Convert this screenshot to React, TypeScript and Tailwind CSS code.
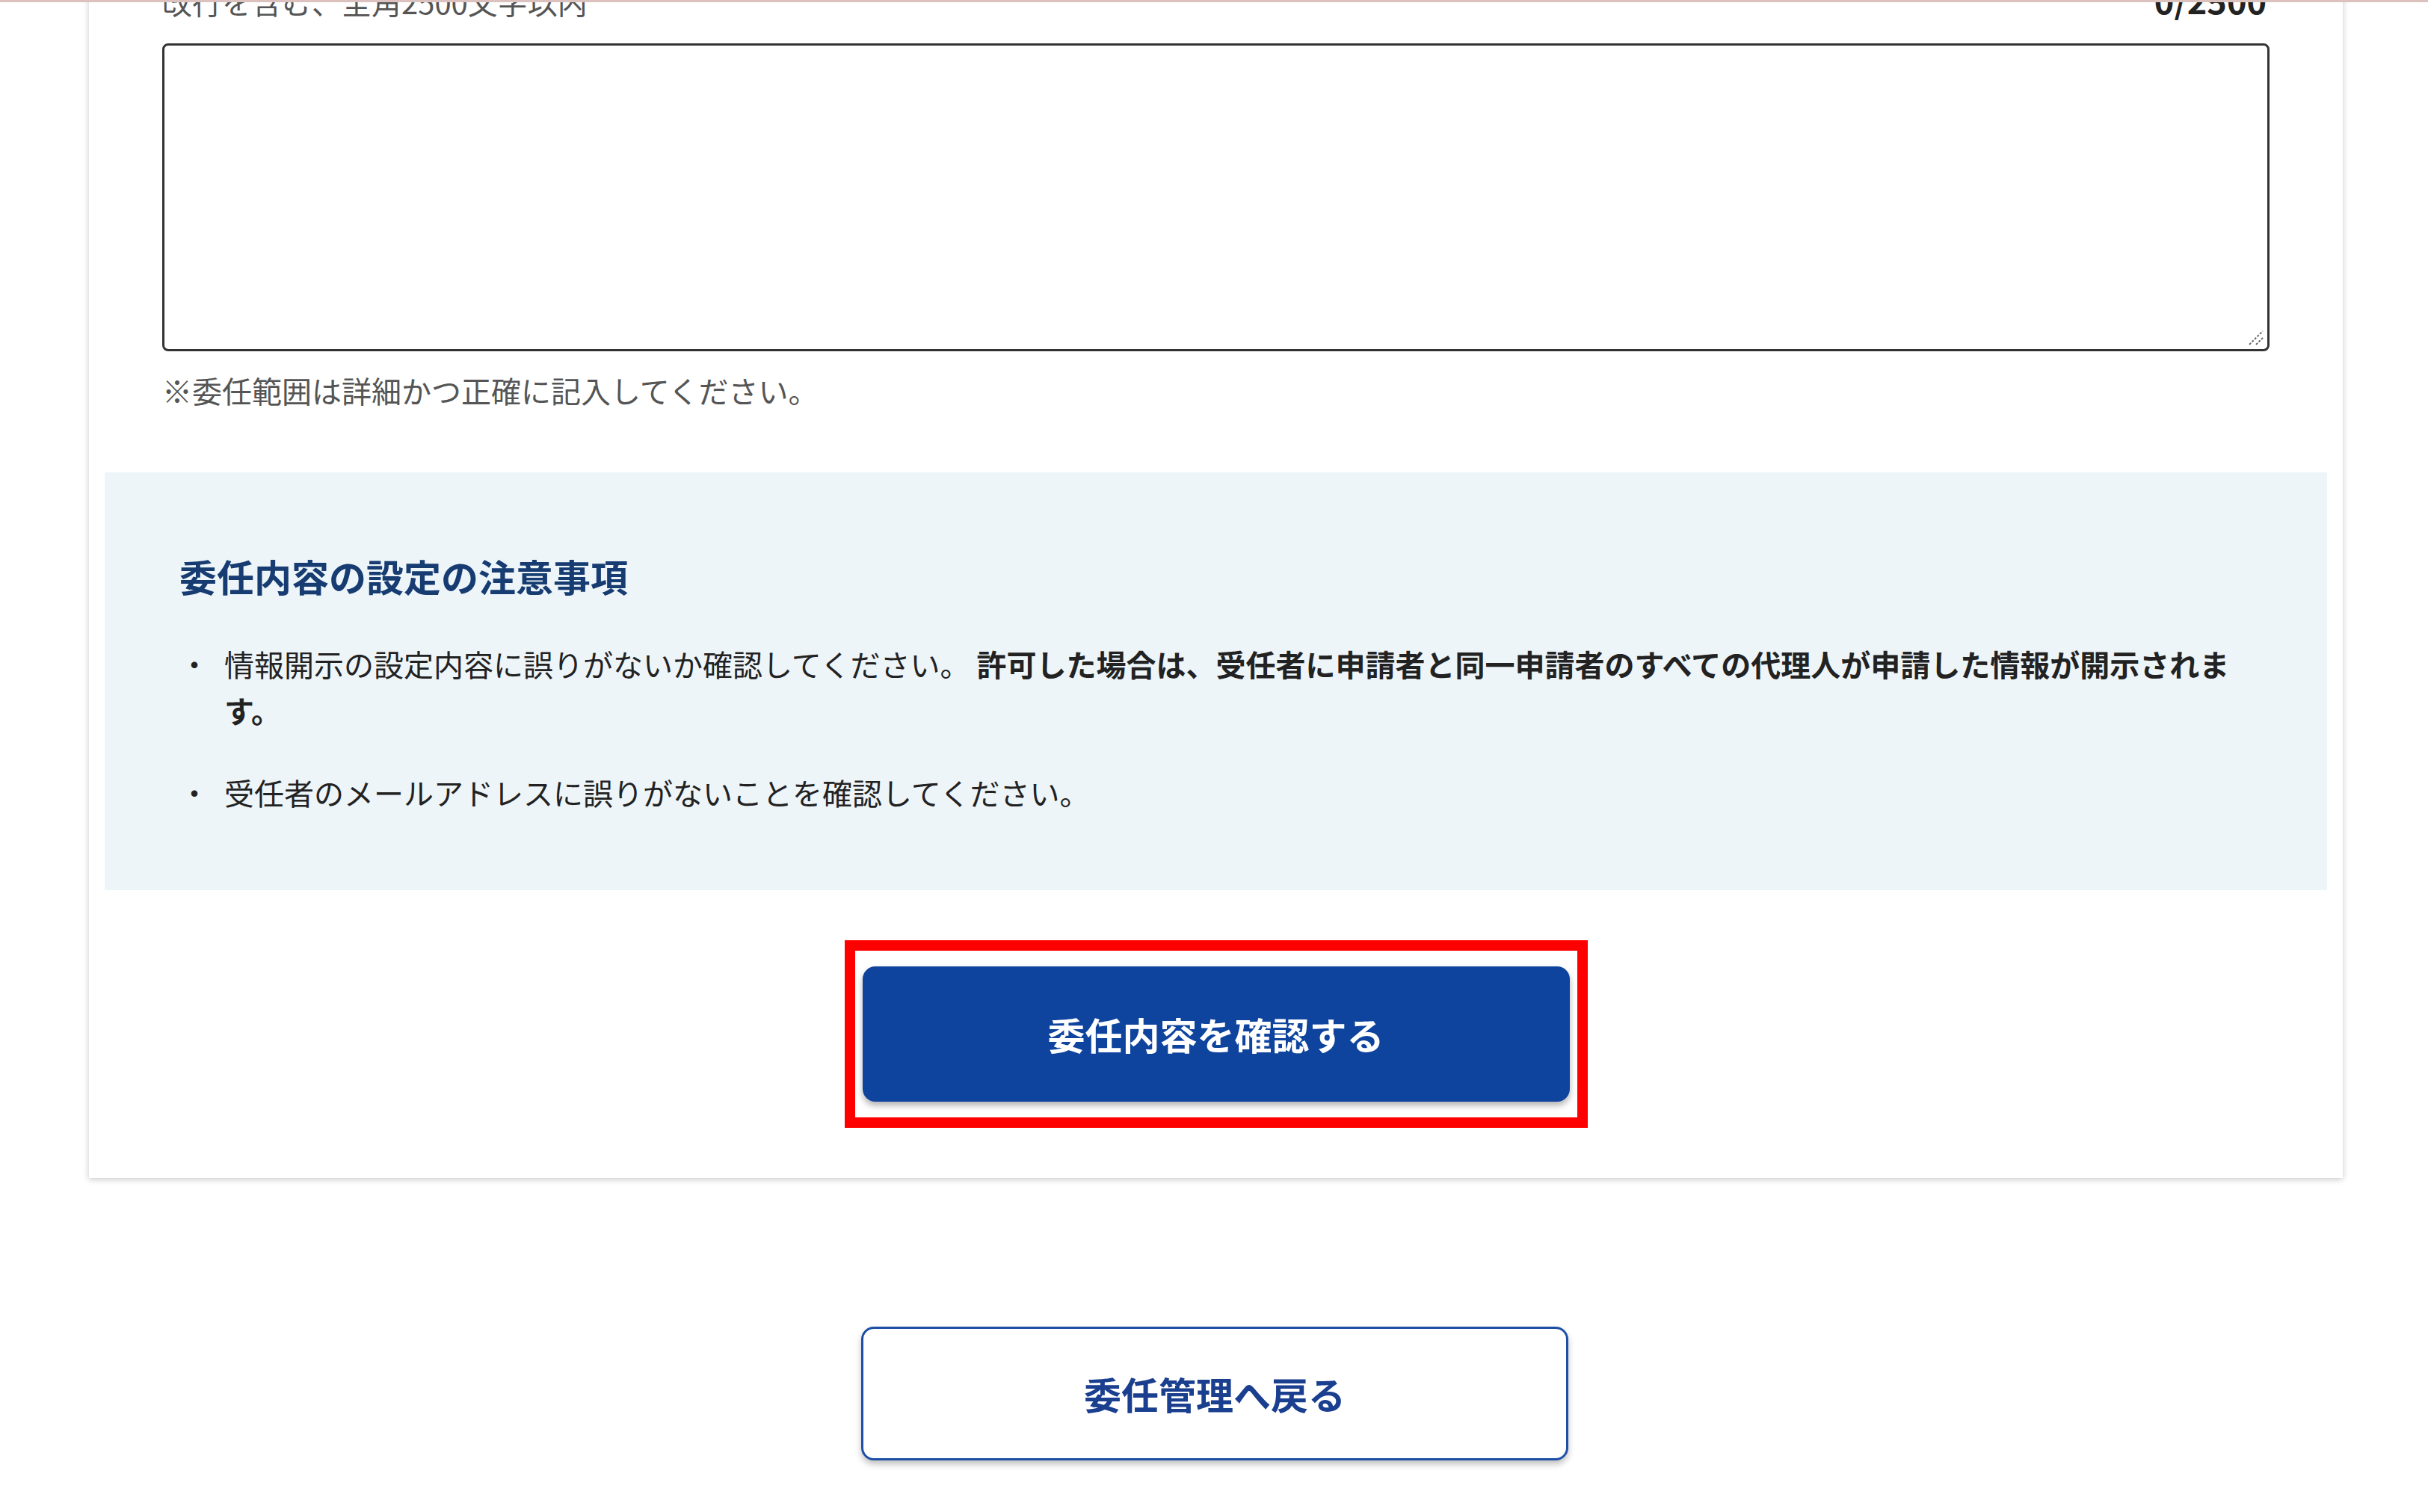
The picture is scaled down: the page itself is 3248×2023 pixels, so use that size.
import React from "react";

export default function App() {
  return (
    <div className="relative w-full h-[2023px] overflow-hidden bg-white font-['Noto_Sans_CJK_JP','Noto_Sans',sans-serif]">
      {/* top edge line */}
      <div className="absolute left-0 top-0 w-full h-[3px] bg-[#dcc2be] z-10" />

      <div className="flex flex-col">
        {/* card */}
        <div className="ml-[119px] w-[3015px] mt-[-30px] flex flex-col bg-white shadow-[0_2px_8px_rgba(0,0,0,0.22)]">
          <div className="px-[98px] flex flex-col">
            <div className="flex items-baseline justify-between h-[60px]">
              <span className="text-[40px] leading-[60px] text-[#555]">改行を含む、全角2500文字以内</span>
              <span className="text-[45px] leading-[60px] font-bold text-[#222] pr-[4px]">0/2500</span>
            </div>
            <div className="relative mt-[28px]">
              <textarea className="block w-full h-[412px] border-[3px] border-[#333] rounded-[8px] bg-white outline-none p-[16px] text-[40px] resize-none" />
              <svg className="absolute right-[7px] bottom-[7px] w-[22px] h-[22px]" viewBox="0 0 22 22" fill="none">
                <path d="M2 20 L20 2" stroke="#666" strokeWidth="2" strokeDasharray="3 2" />
                <path d="M11 20 L20 11" stroke="#666" strokeWidth="2" strokeDasharray="3 2" />
              </svg>
            </div>
            <p className="mt-[22px] text-[40px] leading-[60px] text-[#555]">※委任範囲は詳細かつ正確に記入してください。</p>
          </div>

          {/* notice panel */}
          <div className="mt-[80px] mx-[21px] bg-[#eef5f9] pt-[101px] pb-[100px] pl-[100px] pr-[102px]">
            <h2 className="text-[50px] leading-[75px] font-bold text-[#163c72]">委任内容の設定の注意事項</h2>
            <ul className="mt-[49px] flex flex-col gap-[48px] text-[40px] leading-[62px] text-[#222]">
              <li className="flex">
                <span className="w-[60px] shrink-0">・</span>
                <p>
                  情報開示の設定内容に誤りがないか確認してください。{" "}
                  <strong className="font-bold">許可した場合は、受任者に申請者と同一申請者のすべての代理人が申請した情報が開示されます。</strong>
                </p>
              </li>
              <li className="flex">
                <span className="w-[60px] shrink-0">・</span>
                <p>受任者のメールアドレスに誤りがないことを確認してください。</p>
              </li>
            </ul>
          </div>

          {/* primary button with annotation */}
          <div className="mt-[67px] mb-[67px] flex justify-center">
            <div className="border-[14px] border-[#ff0000] px-[10px] py-[21px]">
              <button className="w-[946px] h-[181px] rounded-[17px] bg-[#0e449e] text-white text-[50px] font-bold shadow-[0_5px_8px_rgba(0,0,0,0.3)]">
                委任内容を確認する
              </button>
            </div>
          </div>
        </div>

        {/* secondary button */}
        <div className="mt-[199px] flex justify-center pl-[2px]">
          <button className="w-[946px] h-[179px] rounded-[17px] bg-white border-[3px] border-[#1d4fa6] text-[#1a3f8f] text-[50px] font-bold shadow-[0_5px_8px_rgba(0,0,0,0.25)]">
            委任管理へ戻る
          </button>
        </div>
      </div>
    </div>
  );
}
